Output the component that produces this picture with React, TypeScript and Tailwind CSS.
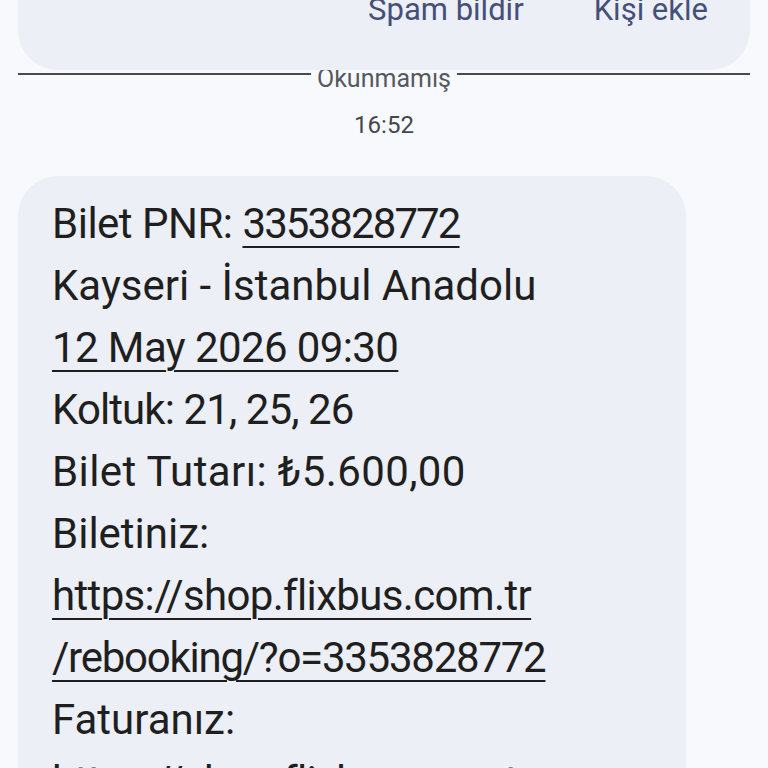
import React from "react";

const FONT = { fontFamily: "Roboto, 'Noto Sans', sans-serif" };

const LINK = "underline decoration-2 underline-offset-[8px]";

// tracking per line keeps widths close to the narrower system font in the shot
const LINES: { text: string; link?: boolean; prefix?: string; tr?: string; inner?: string }[] = [
  { prefix: "Bilet PNR: ", text: "3353828772", link: true, tr: "tracking-[-0.5px]", inner: "tracking-[-1.9px]" },
  { text: "Kayseri - İstanbul Anadolu" },
  { text: "12 May 2026 09:30", link: true, tr: "tracking-[-0.6px]" },
  { text: "Koltuk: 21, 25, 26", tr: "tracking-[-0.9px]" },
  { text: "Bilet Tutarı: ₺5.600,00", tr: "tracking-[0.4px]" },
  { text: "Biletiniz:" },
  { text: "https://shop.flixbus.com.tr", link: true, tr: "tracking-[-0.65px]" },
  { text: "/rebooking/?o=3353828772", link: true, tr: "tracking-[-1.25px]" },
  { text: "Faturanız:" },
  { text: "https://shop.flixbus.com.tr", link: true, tr: "tracking-[-0.65px]" },
  { text: "/invoice/?o=3353828772", link: true, tr: "tracking-[-1.25px]" },
];

export default function App() {
  return (
    <div className="h-[768px] overflow-hidden bg-[#f8f9fd]" style={FONT}>
      {/* suggestion card, mostly scrolled away */}
      <div className="relative z-10 mx-[18px] -mt-[40px] h-[110px] rounded-[40px] bg-[#eceff5] flex items-start justify-end gap-[70px] pr-[42px] pt-[35px]">
        <span className="text-[31px] leading-[30px] text-[#44507a]">Spam bildir</span>
        <span className="text-[31px] leading-[30px] text-[#44507a]">Kişi ekle</span>
      </div>

      {/* unread divider */}
      <div className="relative -mt-[11px] mx-[18px] flex items-center h-[30px] gap-[6px]">
        <div className="relative z-20 flex-1 h-[2px] bg-[#474a52]" />
        <span className="mt-[10px] text-[25px] leading-[30px] text-[#55595f]">Okunmamış</span>
        <div className="relative z-20 flex-1 h-[2px] bg-[#474a52]" />
      </div>

      <div className="mt-[21px] text-center text-[24px] leading-[30px] text-[#44474e]">16:52</div>

      {/* message bubble */}
      <div className="mt-[36px] ml-[18px] w-[668px] rounded-[40px] bg-[#eceff5] pl-[34px] pt-[17px] pb-[20px]">
        {LINES.map((l, i) => (
          <div key={i} className={`text-[42px] leading-[62px] text-[#1f1f1f] whitespace-nowrap ${l.tr ?? ""}`}>
            {l.prefix}
            <span className={`${l.link ? LINK : ""} ${l.inner ?? ""}`}>{l.text}</span>
          </div>
        ))}
      </div>
    </div>
  );
}
